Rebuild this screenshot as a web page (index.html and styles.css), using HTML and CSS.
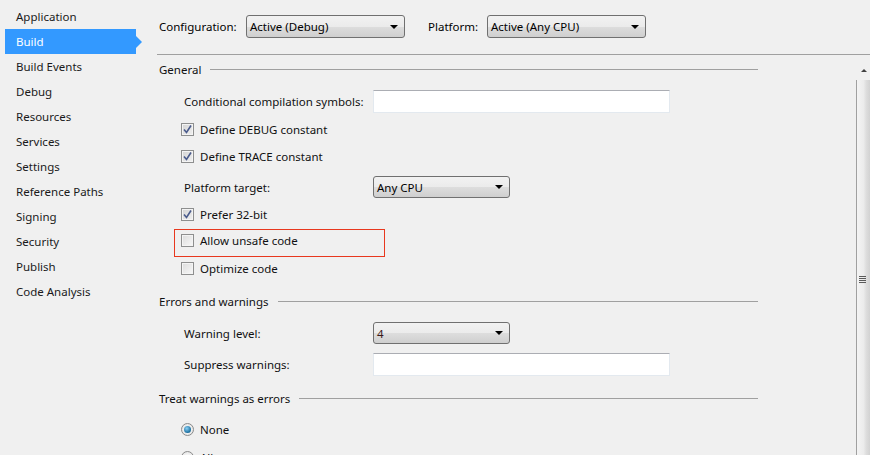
FILE: index.html
```html
<!DOCTYPE html>
<html>
<head>
<meta charset="utf-8">
<link rel="stylesheet" href="styles.css">
</head>
<body>
<div class="app">
  <nav class="sidebar">
    <div class="nav-item">Application</div>
    <div class="nav-item active">Build<span class="nav-arrow"></span></div>
    <div class="nav-item">Build Events</div>
    <div class="nav-item">Debug</div>
    <div class="nav-item">Resources</div>
    <div class="nav-item">Services</div>
    <div class="nav-item">Settings</div>
    <div class="nav-item">Reference Paths</div>
    <div class="nav-item">Signing</div>
    <div class="nav-item">Security</div>
    <div class="nav-item">Publish</div>
    <div class="nav-item">Code Analysis</div>
  </nav>
  <main class="main">
    <div class="topbar">
      <span class="top-label conf">Configuration:</span>
      <div class="select sel-config"><span>Active (Debug)</span><i class="caret"></i></div>
      <span class="top-label plat">Platform:</span>
      <div class="select sel-config"><span>Active (Any CPU)</span><i class="caret"></i></div>
    </div>
    <div class="body">
      <div class="content">
        <div class="group-head h29"><span>General</span><span class="rule"></span></div>
        <div class="row h34"><span class="label lab-w">Conditional compilation symbols:</span><div class="textbox"></div></div>
        <div class="row h22 chk-row"><span class="cb checked"><svg width="9" height="9" viewBox="0 0 9 9"><path d="M1 4.5 L3.5 7.5 L8 0.5" fill="none" stroke="#4a5b8c" stroke-width="1.6"/></svg></span><span>Define DEBUG constant</span></div>
        <div class="row h32 chk-row"><span class="cb checked"><svg width="9" height="9" viewBox="0 0 9 9"><path d="M1 4.5 L3.5 7.5 L8 0.5" fill="none" stroke="#4a5b8c" stroke-width="1.6"/></svg></span><span>Define TRACE constant</span></div>
        <div class="row h30"><span class="label lab-w">Platform target:</span><div class="select sel-small"><span>Any CPU</span><i class="caret"></i></div></div>
        <div class="row h24 chk-row"><span class="cb checked"><svg width="9" height="9" viewBox="0 0 9 9"><path d="M1 4.5 L3.5 7.5 L8 0.5" fill="none" stroke="#4a5b8c" stroke-width="1.6"/></svg></span><span>Prefer 32-bit</span></div>
        <div class="row h30 top-row"><div class="highlight"><span class="cb"></span><span>Allow unsafe code</span></div></div>
        <div class="row h24 chk-row"><span class="cb"></span><span>Optimize code</span></div>
        <div class="group-head h42"><span>Errors and warnings</span><span class="rule"></span></div>
        <div class="row h22"><span class="label lab-w">Warning level:</span><div class="select sel-small"><span class="dark">4</span><i class="caret"></i></div></div>
        <div class="row h40"><span class="label lab-w">Suppress warnings:</span><div class="textbox"></div></div>
        <div class="group-head h28"><span>Treat warnings as errors</span><span class="rule"></span></div>
        <div class="row h34 radio-row"><span class="radio on"></span><span>None</span></div>
        <div class="row h22 radio-row"><span class="radio"></span><span>All</span></div>
      </div>
      <div class="scrollbar">
        <div class="sb-up"><i></i></div>
        <div class="sb-track">
          <div class="sb-thumb"><div class="grip"><b></b><b></b><b></b><b></b></div></div>
        </div>
      </div>
    </div>
  </main>
</div>
</body>
</html>
```

FILE: styles.css
```css
* { box-sizing: border-box; }
html, body { margin: 0; padding: 0; }
body {
  background: #f0f0f0;
  font-family: "Noto Sans", "Open Sans", sans-serif;
  font-size: 11.5px;
  color: #111;
  width: 870px;
  height: 455px;
  overflow: hidden;
}
.app { display: flex; height: 455px; }

.sidebar {
  width: 150px;
  flex: none;
  padding-top: 4px;
  padding-left: 5px;
}
.nav-item {
  position: relative;
  width: 131px;
  height: 25px;
  line-height: 24px;
  padding-top: 1px;
  padding-left: 11px;
  color: #1a1a1a;
}
.nav-item.active {
  background: #3399ff;
  color: #fff;
}
.nav-arrow {
  position: absolute;
  right: -6px;
  top: 7px;
  width: 0; height: 0;
  border-top: 6px solid transparent;
  border-bottom: 6px solid transparent;
  border-left: 6px solid #3399ff;
}

.main { flex: 1; display: flex; flex-direction: column; }
.topbar {
  height: 55px;
  flex: none;
  display: flex;
  align-items: center;
  padding-bottom: 1px;
  border-bottom: 1px solid #a0a0a0;
  margin-left: 7px;
  padding-left: 2px;
}
.top-label { color: #000; flex: none; }
.top-label.conf { width: 87px; }
.top-label.plat { margin-left: 23px; width: 59px; }

.select {
  height: 23px;
  border: 1px solid #707070;
  border-radius: 3px;
  background: linear-gradient(#f2f2f2, #ebebeb 50%, #dddddd 51%, #cfcfcf);
  display: flex;
  align-items: center;
  justify-content: space-between;
  padding: 0 6px 0 3px;
  color: #000;
}
.sel-config { width: 159px; }
.sel-small { width: 137px; height: 22px; }
.caret {
  width: 0; height: 0;
  border-left: 4px solid transparent;
  border-right: 4px solid transparent;
  border-top: 4px solid #000;
}
.dark { color: #3a1a1a; }

.body { flex: 1; display: flex; min-height: 0; }
.content {
  width: 608px;
  padding-left: 9px;
  margin-right: 98px;
}
.group-head {
  display: flex;
  align-items: center;
  color: #111;
}
.rule {
  flex: 1;
  height: 1px;
  background: #a0a0a0;
  margin-left: 9px;
}
.row { display: flex; align-items: center; padding-left: 25px; }
.h22 { height: 22px; }
.h24 { height: 24px; }
.h28 { height: 28px; }
.h29 { height: 29px; }
.h30 { height: 30px; }
.h32 { height: 32px; }
.h34 { height: 34px; }
.h40 { height: 40px; }
.h42 { height: 42px; }
.lab-w { width: 189px; flex: none; }
.label { color: #111; }
.textbox {
  width: 297px;
  height: 23px;
  background: #fff;
  border: 1px solid #abadb3;
  border-color: #abadb3 #e3e9ef #e3e9ef #e3e9ef;
}
.chk-row { padding-left: 22px; }
.cb {
  width: 13px; height: 13px;
  flex: none;
  border: 1px solid #8e8f8f;
  background: linear-gradient(135deg, #dcdcdc, #f8f8f8);
  box-shadow: inset 0 0 0 1px #f4f4f4;
  margin-right: 6px;
  display: flex; align-items: center; justify-content: center;
}
.cb.checked { background: linear-gradient(135deg, #d4d4d4, #f0f0f0); }
.cb svg { display: block; }

.top-row { padding-left: 15px; align-items: flex-start; }
.highlight {
  margin-top: 3px;
  width: 211px;
  height: 28px;
  border: 1px solid #e8381e;
  display: flex;
  align-items: center;
  padding-left: 6px;
  padding-bottom: 5px;
}

.radio-row { padding-left: 22px; }
.radio {
  width: 13px; height: 13px;
  border-radius: 50%;
  border: 1px solid #8a8a8a;
  background: radial-gradient(circle, #f4f4f4 40%, #d8d8d8);
  margin-right: 6px;
  position: relative;
  flex: none;
}
.radio.on::after {
  content: "";
  position: absolute;
  left: 2px; top: 2px;
  width: 7px; height: 7px;
  border-radius: 50%;
  background: radial-gradient(circle at 40% 35%, #8ad0f5, #1a6e9e 70%, #0e4d73);
}

.scrollbar {
  width: 14px;
  margin-left: auto;
  margin-top: 6px;
  display: flex;
  flex-direction: column;
}
.sb-up {
  height: 19px;
  display: flex;
  align-items: center;
  justify-content: center;
  background: #f0f0f0;
}
.sb-up i {
  width: 0; height: 0;
  border-left: 3px solid transparent;
  border-right: 3px solid transparent;
  border-bottom: 3px solid #404040;
  margin-left: 2px;
}
.sb-track {
  flex: 1;
  border-left: 1px solid #a0a0a0;
  background: linear-gradient(90deg, #f4f4f4, #ececec 50%, #dedede 70%, #d2d2d2);
  display: flex;
  align-items: flex-start;
}
.sb-thumb {
  width: 100%;
  height: 100%;
}
.grip {
  margin-top: 196px;
  margin-left: 2px;
  width: 7px;
  display: flex;
  flex-direction: column;
  gap: 1px;
}
.grip b { display: block; height: 1px; background: #5a5a5a; }
```
